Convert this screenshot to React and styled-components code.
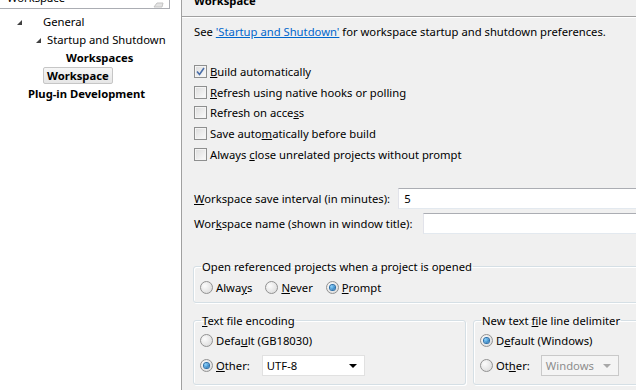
import styled, { createGlobalStyle } from "styled-components";

const GlobalStyle = createGlobalStyle`
  html, body {
    margin: 0;
    padding: 0;
    overflow: hidden;
  }
  body {
    font-family: "Noto Sans", "Open Sans", sans-serif;
    font-size: 11.25px;
    color: #000;
  }
`;

const Window = styled.div`
  display: flex;
  width: 636px;
  height: 390px;
  overflow: hidden;
  background: #f0f0f0;
`;

const Sidebar = styled.div`
  width: 181px;
  flex-shrink: 0;
  background: #fff;
  border-right: 1px solid #a0a0a0;
  display: flex;
  flex-direction: column;
`;

const Search = styled.div`
  width: 169px;
  height: 8px;
  border-right: 1px solid #abadb3;
  border-bottom: 1px solid #abadb3;
  overflow: hidden;
  position: relative;
  span {
    display: block;
    margin-top: -10px;
    padding-left: 7px;
    line-height: 16px;
  }
`;

const ClearIcon = styled.svg`
  position: absolute;
  right: 5px;
  top: 0;
`;

const Tree = styled.div`
  display: flex;
  flex-direction: column;
  padding-top: 3px;
`;

const Node = styled.div`
  display: flex;
  align-items: center;
  height: 18px;
  padding-left: ${(p) => p.indent}px;
  font-weight: ${(p) => (p.bold ? 700 : 400)};
  white-space: nowrap;
`;

const Twisty = styled.span`
  width: 0;
  height: 0;
  border-left: 5px solid transparent;
  border-bottom: 5px solid #404040;
  margin-right: ${(p) => p.gap}px;
  margin-top: 2px;
`;

const Selected = styled.span`
  display: inline-block;
  padding: 0 3px;
  line-height: 15px;
  border: 1px solid #c6c6c6;
  border-radius: 2px;
  background: linear-gradient(#f6f6f6, #e6e6e6);
`;

const Main = styled.div`
  flex: 1;
  display: flex;
  flex-direction: column;
`;

const Header = styled.div`
  height: 16px;
  overflow: hidden;
  border-bottom: 1px solid #a0a0a0;
  box-shadow: 0 1px 0 #fff;
  h1 {
    margin: -7px 0 0 12px;
    font-size: 11.25px;
    font-weight: 700;
    line-height: 16px;
  }
`;

const Body = styled.div`
  display: flex;
  flex-direction: column;
  padding: 6px 0 0 12px;
`;

const Line = styled.div`
  display: flex;
  align-items: center;
  height: 16px;
  white-space: nowrap;
`;

const Link = styled.a`
  color: #0066cc;
  text-decoration: underline;
  cursor: pointer;
`;

const Checks = styled.div`
  display: flex;
  flex-direction: column;
  margin-top: 22px;
`;

const CheckRow = styled.label`
  display: flex;
  align-items: center;
  height: 20.75px;
  white-space: nowrap;
`;

const Box = styled.span`
  width: 11px;
  height: 11px;
  border: 1px solid #8e8f8f;
  background: linear-gradient(135deg, #dcdcdc, #fbfbfb);
  box-shadow: inset 0 0 0 1px #f4f4f4;
  margin-right: 3px;
  display: flex;
  align-items: center;
  justify-content: center;
`;

const Fields = styled.div`
  display: flex;
  flex-direction: column;
  margin-top: 23px;
  gap: 4px;
`;

const FieldRow = styled.div`
  display: flex;
  align-items: center;
  gap: ${(p) => p.gap}px;
  margin-right: -20px;
  white-space: nowrap;
`;

const TextInput = styled.div`
  flex: 1;
  height: 19px;
  background: #fff;
  border: 1px solid #abadb3;
  border-bottom-color: #e3e9ef;
  border-left-color: #e2e3ea;
  border-right-color: #dbdfe6;
  display: flex;
  align-items: center;
  padding-left: 5px;
`;

const Group = styled.fieldset`
  box-sizing: border-box;
  margin: 0;
  padding: 0 0 ${(p) => p.pb || 0}px 6px;
  border: 1px solid #d5dfe5;
  border-radius: 3px;
  box-shadow: inset 1px 1px 0 #fff, 1px 1px 0 #fff;
  min-width: 0;
  flex: ${(p) => (p.grow ? 1 : "none")};
  width: ${(p) => (p.w ? `${p.w}px` : "auto")};
  legend {
    padding: 0 1px;
    margin-left: 1px;
    line-height: 14px;
    white-space: nowrap;
  }
`;

const RadioRow = styled.div`
  display: flex;
  align-items: center;
  gap: ${(p) => p.gap || 0}px;
  height: ${(p) => p.h || 24}px;
  white-space: nowrap;
`;

const RadioItem = styled.label`
  display: flex;
  align-items: center;
  color: ${(p) => (p.disabled ? "#8d8d8d" : "inherit")};
`;

const Dot = styled.span`
  width: 11px;
  height: 11px;
  border-radius: 50%;
  border: 1px solid #929292;
  background: radial-gradient(circle at 35% 35%, #fcfcfc, #d6d6d6);
  margin-right: 3px;
  display: flex;
  align-items: center;
  justify-content: center;
  &::after {
    content: "";
    display: ${(p) => (p.on ? "block" : "none")};
    width: 5px;
    height: 5px;
    border-radius: 50%;
    background: radial-gradient(circle at 35% 35%, #8ad4ff, #0f5fa6);
    box-shadow: 0 0 0 1px #2a6ea8;
  }
`;

const Combo = styled.div`
  width: ${(p) => p.w}px;
  height: 21px;
  box-sizing: border-box;
  margin-left: ${(p) => p.ml || 0}px;
  background: ${(p) => (p.disabled ? "#f4f4f4" : "#fff")};
  border: 1px solid ${(p) => (p.disabled ? "#c9c9c9" : "#e1e1e1")};
  display: flex;
  align-items: center;
  justify-content: space-between;
  padding: 0 7px 0 4px;
  color: ${(p) => (p.disabled ? "#8d8d8d" : "#000")};
  &::after {
    content: "";
    border-left: 4px solid transparent;
    border-right: 4px solid transparent;
    border-top: 4px solid ${(p) => (p.disabled ? "#a8a8a8" : "#000")};
  }
`;

const GroupRow = styled.div`
  display: flex;
  gap: 7px;
  margin-top: ${(p) => p.mt}px;
  margin-left: -1px;
  margin-right: -20px;
`;

function CheckBox({ checked, children }) {
  return (
    <CheckRow>
      <Box>
        {checked && (
          <svg width="9" height="9" viewBox="0 0 9 9">
            <path d="M1 4.5 L3.5 7.5 L8 1" fill="none" stroke="#4a6ea9" strokeWidth="1.6" />
          </svg>
        )}
      </Box>
      <span>{children}</span>
    </CheckRow>
  );
}

function Radio({ on, disabled, children }) {
  return (
    <RadioItem disabled={disabled}>
      <Dot on={on} />
      <span>{children}</span>
    </RadioItem>
  );
}

function App() {
  return (
    <Window>
      <GlobalStyle />
      <Sidebar>
        <Search>
          <span>Workspace</span>
          <ClearIcon width="12" height="8" viewBox="0 0 12 8">
            <path d="M2 7 L10 7 L11 3 L5 3 Z" fill="#e4e4e4" stroke="#c4c4c4" />
          </ClearIcon>
        </Search>
        <Tree>
          <Node indent={17}>
            <Twisty gap={21} />
            General
          </Node>
          <Node indent={36}>
            <Twisty gap={6} />
            Startup and Shutdown
          </Node>
          <Node indent={66} bold>
            Workspaces
          </Node>
          <Node indent={43} bold>
            <Selected>Workspace</Selected>
          </Node>
          <Node indent={28} bold>
            Plug-in Development
          </Node>
        </Tree>
      </Sidebar>
      <Main>
        <Header>
          <h1>Workspace</h1>
        </Header>
        <Body>
          <Line>
            See&nbsp;<Link>'Startup and Shutdown'</Link>&nbsp;for workspace startup and shutdown preferences.
          </Line>
          <Checks>
            <CheckBox checked>
              <u>B</u>uild automatically
            </CheckBox>
            <CheckBox>
              <u>R</u>efresh using native hooks or polling
            </CheckBox>
            <CheckBox>
              Refresh on acce<u>s</u>s
            </CheckBox>
            <CheckBox>
              Save auto<u>m</u>atically before build
            </CheckBox>
            <CheckBox>
              Always <u>c</u>lose unrelated projects without prompt
            </CheckBox>
          </Checks>
          <Fields>
            <FieldRow gap={8}>
              <label>
                <u>W</u>orkspace save interval (in minutes):
              </label>
              <TextInput>5</TextInput>
            </FieldRow>
            <FieldRow gap={10}>
              <label>
                Wor<u>k</u>space name (shown in window title):
              </label>
              <TextInput />
            </FieldRow>
          </Fields>
          <GroupRow mt={26}>
            <Group grow>
              <legend>Open referenced projects when a project is opened</legend>
              <RadioRow gap={13} h={28}>
                <Radio>
                  Alwa<u>y</u>s
                </Radio>
                <Radio>
                  <u>N</u>ever
                </Radio>
                <Radio on>
                  <u>P</u>rompt
                </Radio>
              </RadioRow>
            </Group>
          </GroupRow>
          <GroupRow mt={11}>
            <Group w={273} pb={6}>
              <legend>
                <u>T</u>ext file encoding
              </legend>
              <RadioRow h={26}>
                <Radio>
                  Defa<u>u</u>lt (GB18030)
                </Radio>
              </RadioRow>
              <RadioRow h={24}>
                <Radio on>
                  <u>O</u>ther:
                </Radio>
                <Combo w={103} ml={12}>
                  UTF-8
                </Combo>
              </RadioRow>
            </Group>
            <Group grow pb={6}>
              <legend>
                New text <u>f</u>ile line delimiter
              </legend>
              <RadioRow h={26}>
                <Radio on>
                  D<u>e</u>fault (Windows)
                </Radio>
              </RadioRow>
              <RadioRow h={24}>
                <Radio>
                  Ot<u>h</u>er:
                </Radio>
                <Combo w={78} ml={11} disabled>
                  Windows
                </Combo>
              </RadioRow>
            </Group>
          </GroupRow>
        </Body>
      </Main>
    </Window>
  );
}

export default App;
